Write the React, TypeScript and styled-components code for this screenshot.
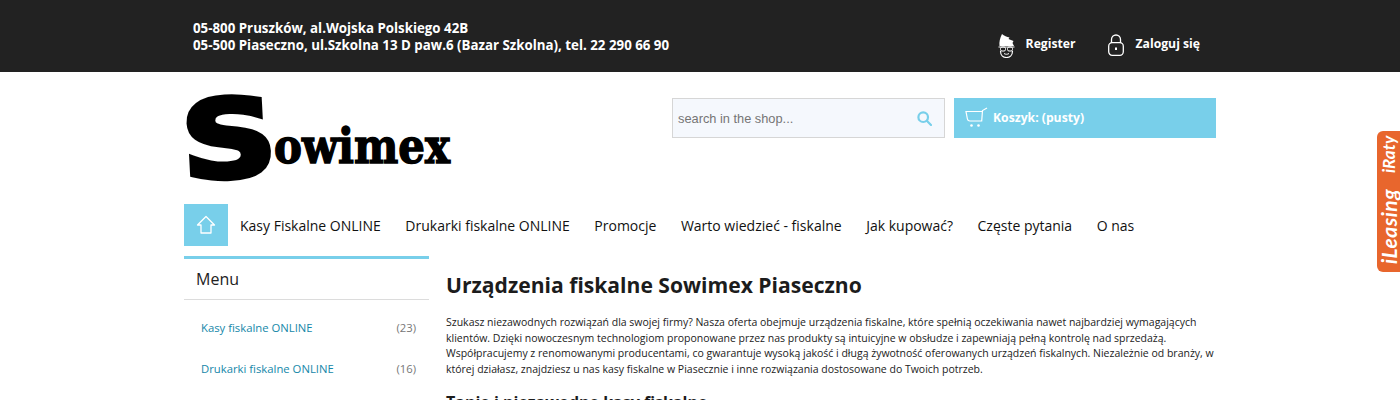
import React from 'react'
import styled, { createGlobalStyle } from 'styled-components'

const GlobalStyle = createGlobalStyle`
  html, body {
    margin: 0;
    padding: 0;
    background: #fff;
    overflow: hidden;
    font-family: 'Open Sans', sans-serif;
  }
  * {
    box-sizing: border-box;
  }
`

const Page = styled.div`
  position: relative;
  width: 1400px;
  height: 400px;
  overflow: hidden;
`

const TopBar = styled.header`
  height: 72px;
  background: #222222;
  color: #fff;
`

const TopInner = styled.div`
  width: 1032px;
  height: 100%;
  margin: 0 auto;
  padding: 0 16px 0 9px;
  display: flex;
  align-items: center;
  justify-content: space-between;
`

const Address = styled.div`
  padding-top: 1px;
  font-size: 13.3px;
  font-weight: 700;
  line-height: 17px;
`

const AccountLinks = styled.div`
  display: flex;
  align-items: center;
  gap: 31px;
  padding-top: 14px;
`

const AccountLink = styled.a`
  display: flex;
  align-items: center;
  gap: 11px;
  font-size: 12.2px;
  font-weight: 700;
  color: #fff;

  svg {
    margin-top: 4px;
  }
`

const Container = styled.div`
  width: 1032px;
  margin: 0 auto;
`

const HeaderRow = styled.div`
  height: 132px;
  display: flex;
  justify-content: space-between;
`

const Logo = styled.svg`
  display: block;
  margin-top: 18px;
  width: 272px;
  height: 96px;
`

const LogoInitial = styled.text`
  font-family: 'DejaVu Sans', sans-serif;
  font-weight: 700;
  fill: #000;
  stroke: #000;
  stroke-width: 5px;
`

const LogoWord = styled.text`
  font-family: 'DejaVu Serif', serif;
  font-weight: 700;
  fill: #000;
  stroke: #000;
  stroke-width: 1.5px;
`

const HeaderTools = styled.div`
  display: flex;
  gap: 9px;
  padding-top: 26px;
`

const SearchBox = styled.div`
  width: 273px;
  height: 40px;
  display: flex;
  align-items: center;
  justify-content: space-between;
  padding: 0 12px 0 5px;
  background: #f5f8fd;
  border: 1px solid #d6d6d6;
  font-family: 'Liberation Sans', sans-serif;
  font-size: 12.8px;
  color: #757575;
`

const Cart = styled.div`
  width: 262px;
  height: 40px;
  display: flex;
  align-items: center;
  gap: 5px;
  padding: 0 0 2px 11px;
  background: #78cfea;
  color: #fff;
  font-size: 12.2px;
  font-weight: 700;
`

const Nav = styled.nav`
  height: 42px;
  display: flex;
  align-items: center;
  gap: 24.5px;
  font-size: 14px;
  color: #111;
`

const HomeButton = styled.a`
  width: 44px;
  height: 42px;
  margin-right: -12.5px;
  display: flex;
  align-items: center;
  justify-content: center;
  background: #78cfea;
`

const NavItem = styled.a`
  color: #111;
`

const Columns = styled.div`
  display: flex;
  gap: 17px;
  margin-top: 10px;
`

const Sidebar = styled.aside`
  width: 245px;
  flex: none;
  border-top: 3px solid #78cfea;
`

const SidebarTitle = styled.div`
  height: 41px;
  display: flex;
  align-items: center;
  padding: 0 0 0 12px;
  font-size: 16px;
  color: #222;
  border-bottom: 1px solid #dcdcdc;
`

const CategoryList = styled.ul`
  list-style: none;
  margin: 7px 0 0;
  padding: 0 13px 0 17px;
`

const CategoryRow = styled.li`
  height: 41px;
  display: flex;
  align-items: center;
  justify-content: space-between;
  font-size: 11.3px;
  color: #1587a9;
`

const Count = styled.span`
  color: #777;
`

const Main = styled.main`
  flex: 1;
  color: #222;
`

const Title = styled.h1`
  margin: 14px 0 15px;
  font-size: 21.1px;
  font-weight: 700;
  line-height: 30px;
  color: #1c1c1c;
`

const Paragraph = styled.p`
  margin: 0 0 14px;
  font-size: 10.5px;
  line-height: 15.6px;
`

const Subtitle = styled.h2`
  margin: 0;
  font-size: 16px;
  font-weight: 700;
  line-height: 22px;
  color: #1c1c1c;
`

const RatesTab = styled.div`
  position: absolute;
  top: 131px;
  right: 0;
  width: 23px;
  height: 141px;
  display: flex;
  align-items: center;
  justify-content: space-between;
  writing-mode: vertical-rl;
  transform: rotate(180deg);
  padding: 8px 0 5px;
  background: #e8662d;
  border-radius: 0 6px 6px 0;
  color: #fff;
  font-family: 'Lato', sans-serif;
  font-weight: 700;
  font-style: italic;
  line-height: 23px;
`

const RatesLabel = styled.span<{ $size: number; $spacing: number }>`
  font-size: ${({ $size }) => $size}px;
  letter-spacing: ${({ $spacing }) => $spacing}px;
`

const GuyIcon = () => (
  <svg width="17" height="25" viewBox="0 0 17 25" fill="none">
    <path d="M1.500 13C1 9 2 5 4 1c2 2 5 3 7.500 3.500L10.500 6l5 2-1 2 1.500 3Z" fill="#fff" />
    <path d="M.5 14h16" stroke="#fff" strokeWidth="1" />
    <rect x="2.500" y="14" width="5" height="4" rx="1.500" stroke="#fff" />
    <rect x="9.500" y="14" width="5" height="4" rx="1.500" stroke="#fff" />
    <path d="M2.500 18c0 4 2.500 6.500 6 6.500s6-2.500 6-6.500" stroke="#fff" strokeWidth="1.200" />
    <path d="M6 20.500c1.500 1 3.500 1 5 0" stroke="#fff" />
  </svg>
)

const LockIcon = () => (
  <svg width="18" height="22" viewBox="0 0 18 22" fill="none" stroke="#fff" strokeWidth="1.300">
    <path d="M4.500 9V5.500a4.500 4.500 0 0 1 9 0V9" />
    <rect x="1.700" y="8.700" width="14.600" height="12.600" rx="3.500" />
    <path d="M9 13.500v2.500" strokeWidth="2" />
  </svg>
)

const SearchIcon = () => (
  <svg width="15" height="15" viewBox="0 0 15 15" fill="none" stroke="#78cfea" strokeWidth="2.200">
    <circle cx="6.200" cy="6.200" r="4.800" />
    <path d="M9.800 9.800l4.200 4.200" strokeLinecap="round" />
  </svg>
)

const CartIcon = () => (
  <svg width="23" height="21" viewBox="0 0 23 21" fill="none" stroke="#fff" strokeWidth="1.200">
    <path d="M22 1l-4.500 2.500-.8 10.500H5C3.500 14 2.500 13 2.300 11.500L1 4.500h16.500" />
    <circle cx="6.500" cy="18.500" r="1.300" fill="#fff" stroke="none" />
    <circle cx="13.500" cy="18.500" r="1.300" fill="#fff" stroke="none" />
  </svg>
)

const HomeIcon = () => (
  <svg width="20" height="20" viewBox="0 0 20 20" fill="none" stroke="#fff" strokeWidth="1.300" strokeLinejoin="round">
    <path d="M10 1.500l8.500 8.500h-3.500v8H5v-8H1.500Z" />
  </svg>
)

const navItems = [
  'Kasy Fiskalne ONLINE',
  'Drukarki fiskalne ONLINE',
  'Promocje',
  'Warto wiedzieć - fiskalne',
  'Jak kupować?',
  'Częste pytania',
  'O nas',
]

const categories = [
  { name: 'Kasy fiskalne ONLINE', count: 23 },
  { name: 'Drukarki fiskalne ONLINE', count: 16 },
]

const App: React.FC = () => {
  return (
    <Page>
      <GlobalStyle />
      <TopBar>
        <TopInner>
          <Address>
            05-800 Pruszków, al.Wojska Polskiego 42B
            <br />
            05-500 Piaseczno, ul.Szkolna 13 D paw.6 (Bazar Szkolna), tel. 22 290 66 90
          </Address>
          <AccountLinks>
            <AccountLink>
              <GuyIcon />
              Register
            </AccountLink>
            <AccountLink>
              <LockIcon />
              Zaloguj się
            </AccountLink>
          </AccountLinks>
        </TopInner>
      </TopBar>
      <Container>
        <HeaderRow>
          <Logo viewBox="0 0 272 96">
            <LogoInitial x="-3" y="87" fontSize="108" textLength="96" lengthAdjust="spacingAndGlyphs" transform="rotate(-3 45 48)">S</LogoInitial>
            <LogoWord x="90" y="73" fontSize="48" textLength="176" lengthAdjust="spacingAndGlyphs">owimex</LogoWord>
          </Logo>
          <HeaderTools>
            <SearchBox>
              search in the shop...
              <SearchIcon />
            </SearchBox>
            <Cart>
              <CartIcon />
              Koszyk: (pusty)
            </Cart>
          </HeaderTools>
        </HeaderRow>
        <Nav>
          <HomeButton>
            <HomeIcon />
          </HomeButton>
          {navItems.map((item) => (
            <NavItem key={item}>{item}</NavItem>
          ))}
        </Nav>
        <Columns>
          <Sidebar>
            <SidebarTitle>Menu</SidebarTitle>
            <CategoryList>
              {categories.map((category) => (
                <CategoryRow key={category.name}>
                  {category.name}
                  <Count>({category.count})</Count>
                </CategoryRow>
              ))}
            </CategoryList>
          </Sidebar>
          <Main>
            <Title>Urządzenia fiskalne Sowimex Piaseczno</Title>
            <Paragraph>
              Szukasz niezawodnych rozwiązań dla swojej firmy? Nasza oferta obejmuje urządzenia fiskalne, które spełnią oczekiwania nawet najbardziej wymagających klientów. Dzięki nowoczesnym technologiom proponowane przez nas produkty są intuicyjne w obsłudze i zapewniają pełną kontrolę nad sprzedażą. Współpracujemy z renomowanymi producentami, co gwarantuje wysoką jakość i długą żywotność oferowanych urządzeń fiskalnych. Niezależnie od branży, w której działasz, znajdziesz u nas kasy fiskalne w Piasecznie i inne rozwiązania dostosowane do Twoich potrzeb.
            </Paragraph>
            <Subtitle>Tanie i niezawodne kasy fiskalne</Subtitle>
          </Main>
        </Columns>
      </Container>
      <RatesTab>
        <RatesLabel $size={21} $spacing={0.5}>iLeasing</RatesLabel>
        <RatesLabel $size={17} $spacing={0}>iRaty</RatesLabel>
      </RatesTab>
    </Page>
  )
}

export default App
